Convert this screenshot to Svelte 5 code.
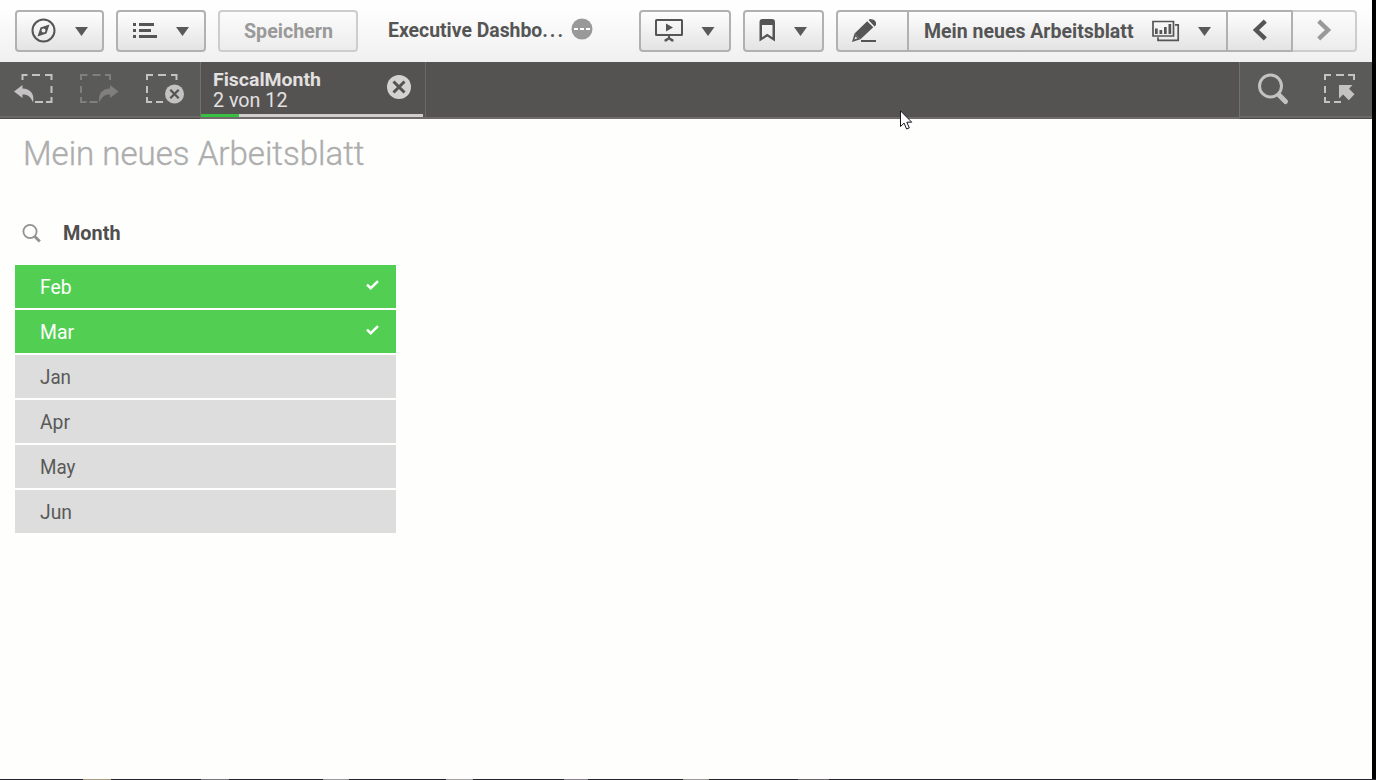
<script>
  const months = [
    { name: 'Feb', width: 31.5, selected: true },
    { name: 'Mar', width: 34, selected: true },
    { name: 'Jan', width: 31, selected: false },
    { name: 'Apr', width: 30, selected: false },
    { name: 'May', width: 35.5, selected: false },
    { name: 'Jun', width: 32, selected: false }
  ];

  // Taskbar slivers along the bottom edge: start, width, colour
  const slivers = [
    [83, 28, '#a59c86'], [201, 28, '#77777b'], [323, 26, '#99999b'],
    [446, 27, '#a3a0a1'], [564, 24, '#89818c'], [683, 26, '#9b999b'], [798, 31, '#676568']
  ];

  // Condenses a label horizontally to the given width
  function fit(node, width) {
    const natural = node.getBoundingClientRect().width;
    node.style.transform = `scaleX(${width / natural})`;
  }
</script>

{#snippet caret(x)}
  <path d="M{x} 27h13l-6.500 9z" fill="#595959" />
{/snippet}

<div class="screen">
  <div class="app">
    <header class="toolbar">
      <button class="btn nav" aria-label="Navigation">
        <svg width="89" height="42" viewBox="15 10 89 42">
          <circle cx="43.500" cy="30.500" r="11" fill="none" stroke="#555" stroke-width="2" />
          <path fill-rule="evenodd" fill="#555" d="M49.500 24.500 46.500 33.500 37.500 36.500 40.500 27.500zM43.500 28.500a2 2 0 1 0 0 4a2 2 0 1 0 0-4z" />
          {@render caret(75)}
        </svg>
      </button>
      <button class="btn list" aria-label="Menu">
        <svg width="90" height="42" viewBox="116 10 90 42">
          <path fill="#555" d="M133 23h3v3h-3zM139 23h15v3h-15zM133 29h3v3h-3zM139 29h12v3h-12zM133 35h3v3h-3zM139 35h18v3h-18z" />
          {@render caret(176)}
        </svg>
      </button>
      <button class="btn save"><span class="txt" use:fit={89}>Speichern</span></button>
      <div class="app-name"><span class="txt" use:fit={177}>Executive Dashbo<span class="dots">...</span></span></div>
      <svg class="more" width="22" height="22" viewBox="571 18 22 22">
        <circle cx="582" cy="29" r="10.500" fill="#999" />
        <path stroke="#fff" stroke-width="2" d="M574 29h4m2 0h4m2 0h4" />
      </svg>
      <button class="btn present" aria-label="Story">
        <svg width="92" height="42" viewBox="639 10 92 42">
          <rect x="656" y="20" width="26" height="15" rx=".5" fill="none" stroke="#555" stroke-width="2" />
          <path fill="#555" d="M666 23.500v8l7-4zM668 36h2v1.500l3.500 2v2h-2l-2.500-2-2.500 2h-2v-2l3.500-2z" />
          {@render caret(701.5)}
        </svg>
      </button>
      <button class="btn mark" aria-label="Bookmarks">
        <svg width="81" height="42" viewBox="743 10 81 42">
          <path fill="#555" fill-rule="evenodd" d="M759.500 41.500V22q0-3 3-3h9.500q3 0 3 3v19.500l-7.750-5zM762 25v12.300l5.250-3.500 5.250 3.500V25z" />
          {@render caret(794)}
        </svg>
      </button>
      <div class="group">
        <button class="btn edit" aria-label="Edit">
          <svg width="73" height="42" viewBox="836 10 73 42">
            <path fill="#555" d="M854.500 33.600 867.200 21.300 873.300 27.300 860.500 39.300zM868.500 20 870 19Q877 19.500 876 25l-1.500 1.500zM861 40h15v2h-15z" />
            <path fill="#555" fill-rule="evenodd" d="M854.500 33.500 860.500 39.300 852 42zM855.600 36.500 854.300 39.500 857.500 38.300z" />
          </svg>
        </button>
        <button class="btn sheet">
          <span class="txt" use:fit={209.5}>Mein neues Arbeitsblatt</span>
          <svg width="78" height="42" viewBox="1150 10 78 42">
            <path fill="none" stroke="#555" stroke-width="1.700" d="M1153 21.500h20.500v14.500H1153zM1175 24.800h3.200v15.500h-20.200v-3" />
            <path fill="#555" d="M1155 28.500h2.700v5.500h-2.700zM1159.500 30h2.700v4h-2.700zM1164 27h2.700v7h-2.700zM1168.500 24h2.700v10h-2.700z" />
            {@render caret(1198)}
          </svg>
        </button>
        <button class="btn prev" aria-label="Previous sheet">
          <svg width="66" height="42" viewBox="1227 10 66 42"><path d="M1265.300 21.200 1256 30l9.300 8.800" fill="none" stroke="#555" stroke-width="4.400" /></svg>
        </button>
        <button class="btn next" aria-label="Next sheet">
          <svg width="65" height="42" viewBox="1292 10 65 42"><path d="M1318.700 21.200 1328 30l-9.300 8.800" fill="none" stroke="#999" stroke-width="4.400" /></svg>
        </button>
      </div>
    </header>

    <section class="selections">
      <div class="tools left">
        <svg width="200" height="55" viewBox="0 62 200 55">
          <path fill="none" stroke="#c4c2c2" stroke-width="2" d="M22.500 80v-5h5M32 75h8M45 75h6.500v5M51.500 86v7M51.500 97v5H46M35 102h8" />
          <path fill="#c4c2c2" d="M14 91.500 22.500 85v3.500C30 88.500 35 94 33 102.500 31 97 28 94.500 22.500 94.500V98z" />
          <g transform="translate(132.5 0) scale(-1 1)">
            <path fill="none" stroke="#817e7e" stroke-width="2" d="M22.500 80v-5h5M32 75h8M45 75h6.500v5M51.500 86v7M51.500 97v5H46M35 102h8" />
            <path fill="#817e7e" d="M14 91.500 22.500 85v3.500C30 88.500 35 94 33 102.500 31 97 28 94.500 22.500 94.500V98z" />
          </g>
          <path fill="none" stroke="#c4c2c2" stroke-width="2" d="M147 80v-5h6M158 75h8M171 75h5.500v5M147 86v7M147 97v5h5M156 102h7" />
          <circle cx="174.500" cy="94" r="9.500" fill="#c4c2c2" />
          <path d="m170.300 89.800 8.400 8.400m0-8.400-8.400 8.400" stroke="#555" stroke-width="2.300" />
        </svg>
      </div>
      <div class="field">
        <div class="field-row">
          <div class="field-text">
            <div class="field-name"><span class="txt" use:fit={108}>FiscalMonth</span></div>
            <div class="field-count"><span class="txt" use:fit={74.5}>2 von 12</span></div>
          </div>
          <svg width="24" height="24" viewBox="0 0 24 24">
            <circle cx="12" cy="12" r="12" fill="#d3d1d1" />
            <path d="m6.500 6.500 11 11m0-11-11 11" stroke="#555351" stroke-width="3" />
          </svg>
        </div>
        <div class="progress"><div class="fill"></div></div>
      </div>
      <div class="spacer"></div>
      <div class="tools right">
        <svg width="132" height="55" viewBox="1240 62 132 55">
          <circle cx="1270.500" cy="86" r="11" fill="none" stroke="#c4c2c2" stroke-width="3" />
          <path d="m1279 95 6.500 6.500" stroke="#c4c2c2" stroke-width="5" stroke-linecap="round" />
          <path fill="none" stroke="#c4c2c2" stroke-width="2" d="M1325 80v-5h6M1336 75h8M1348 75h6v5M1325 86v7M1325 97v5h5M1334 102h7" />
          <path fill="#c4c2c2" d="M1339 85h13.500l-3.500 3.700 5.500 5.600-5.700 5.900-5.700-5.800-4.100 4.100z" />
        </svg>
      </div>
    </section>

    <main>
      <h1><span class="txt" use:fit={341.5}>Mein neues Arbeitsblatt</span></h1>
      <section class="filter">
        <div class="filter-head">
          <svg width="20" height="20" viewBox="22 223 20 20">
            <circle cx="30" cy="231.500" r="6.600" fill="none" stroke="#929292" stroke-width="1.800" />
            <path d="m34.800 236.500 5 5" stroke="#929292" stroke-width="3" />
          </svg>
          <h2><span class="txt" use:fit={57.5}>Month</span></h2>
        </div>
        <ul>
          {#each months as m}
            <li class:selected={m.selected}>
              <span class="txt" use:fit={m.width}>{m.name}</span>
              {#if m.selected}
                <svg width="13" height="10" viewBox="0 0 13 10"><path d="m1 4.700 3.700 3.500L12 1.200" fill="none" stroke="#fff" stroke-width="2.500" /></svg>
              {/if}
            </li>
          {/each}
        </ul>
      </section>
    </main>
  </div>
  <svg class="edge" width="1376" height="1" viewBox="0 0 1376 1">
    <rect width="1376" height="1" fill="#242329" />
    {#each slivers as [x, w, c]}
      <rect {x} y="0" width={w} height="1" fill={c} />
    {/each}
  </svg>
  <svg class="pointer" width="14" height="21" viewBox="0 0 14 21">
    <path d="M.5.800v15.700l3.600-3.400 2.500 5.900 2.700-1.100-2.500-5.700h4.900z" fill="#fff" stroke="#17171f" />
  </svg>
</div>

<style>
  :global(body) { margin: 0; background: #000; }
  * { box-sizing: border-box; }
  .screen { position: relative; display: flex; flex-direction: column; width: 1376px; height: 780px; overflow: hidden; background: #000; font-family: Roboto, "Liberation Sans", sans-serif; color: #555; }
  .app { flex: 1; width: 1372px; background: #fefefd; display: flex; flex-direction: column; }
  svg { display: block; flex: none; }
  .txt { display: inline-block; white-space: nowrap; transform-origin: 0 50%; }
  .toolbar { height: 62px; padding: 10px 15px 0; display: flex; align-items: flex-start; background: linear-gradient(#fefefe 15%, #f0f0f0); }
  .btn { height: 42px; padding: 0; border: 2px solid #b1b1b1; border-radius: 4px; background: linear-gradient(#fefefe, #e3e3e3); display: flex; align-items: center; font: 700 20px/24px Roboto, sans-serif; color: #555; flex: none; }
  .btn > svg { margin: -2px; }
  .nav { width: 89px; margin-right: 12px; }
  .list { width: 90px; margin-right: 12px; }
  .save { width: 140px; padding-left: 24px; color: #999; border-color: #cdcdcd; background: linear-gradient(#fcfcfc, #ececec); }
  .app-name { width: 183px; margin-left: 30px; padding-top: 8px; font: 700 20px/24px Roboto, sans-serif; }
  .dots { letter-spacing: 2px; }
  .more { margin: 8px 46px 0 0; }
  .present { width: 92px; margin-right: 12px; }
  .mark { width: 81px; margin-right: 12px; }
  .group { display: flex; }
  .edit { width: 73px; border-radius: 4px 0 0 4px; }
  .sheet { width: 321px; margin-left: -2px; padding-left: 15px; border-radius: 0; }
  .sheet > svg { margin-left: auto; }
  .prev { width: 66px; margin-left: -1px; border-radius: 0; border-left-width: 1px; }
  .prev > svg { margin-left: -1px; }
  .next { width: 65px; margin-left: -1px; border-radius: 0 4px 4px 0; border-color: #cdcdcd; border-left: 1px solid #b1b1b1; background: linear-gradient(#fcfcfc, #ececec); }
  .next > svg { margin-left: -1px; }
  .selections { height: 57px; display: flex; background: #555351; border-bottom: 2px solid #706b6b; }
  .tools { background: #5a5a58; height: 57px; border-bottom: 1px solid #4c4b4a; box-shadow: inset 0 -2px #6c6868; }
  .left { width: 200px; }
  .right { width: 133px; border-left: 1px solid #737070; }
  .field { width: 226px; height: 55px; border-left: 1px solid #737070; border-right: 1px solid #6b6868; color: #e2e0e0; }
  .field-row { height: 52px; display: flex; justify-content: space-between; padding: 0 14px 0 12px; }
  .field-row > svg { margin-top: 13px; }
  .field-text { padding-top: 8px; line-height: 19px; }
  .field-name { font-weight: 700; font-size: 19px; height: 20px; }
  .field-count { font-size: 19.500px; height: 20px; padding-top: 1px; }
  .field-text .txt { line-height: 19px; }
  .progress { width: 222px; height: 3px; background: #d0cece; }
  .fill { width: 38px; height: 3px; background: #38c040; }
  .spacer { flex: 1; }
  h1 { margin: 0; padding: 14px 0 0 22.500px; height: 102px; font-weight: 300; font-size: 34px; line-height: 40px; color: #adadad; -webkit-text-stroke: .4px #adadad; }
  .filter { width: 381px; margin-left: 15px; }
  .filter-head { display: flex; padding: 2px 0 0 7px; height: 44px; gap: 21px; }
  h2 { margin: -1px 0 0; font-size: 19.500px; line-height: 24px; font-weight: 700; color: #4f4f4f; }
  ul { list-style: none; margin: 0; padding: 0; display: grid; gap: 2px; }
  li { height: 43px; padding: 1px 17px 0 25px; background: #ddd; display: flex; align-items: center; justify-content: space-between; font-size: 19.500px; color: #595959; }
  li svg { margin-bottom: 5px; }
  li.selected { background: #52cf52; color: #fff; }
  .edge { width: 1376px; height: 1px; }
  .pointer { position: absolute; left: 900px; top: 110px; }
</style>
